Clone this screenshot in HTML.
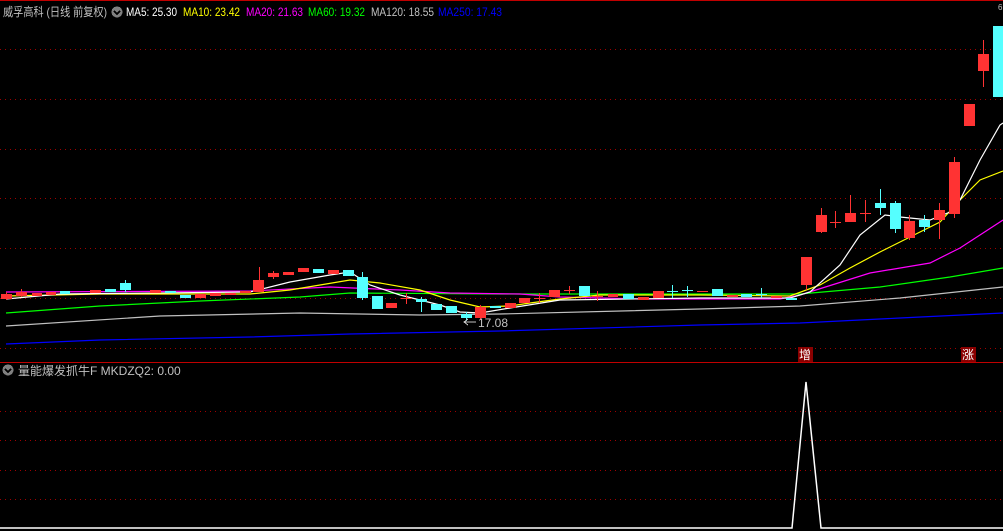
<!DOCTYPE html>
<html><head><meta charset="utf-8"><style>
html,body{margin:0;padding:0;background:#000;width:1003px;height:531px;overflow:hidden}
svg{display:block}
text{font-family:"Liberation Sans","Noto Sans CJK SC",sans-serif;font-size:12px}
</style></head><body>
<svg width="1003" height="531" viewBox="0 0 1003 531" xmlns="http://www.w3.org/2000/svg" shape-rendering="crispEdges">
<rect width="1003" height="531" fill="#000"/>
<line x1="0" y1="0.5" x2="1003" y2="0.5" stroke="#c00000"/>
<g stroke="#a00000" stroke-dasharray="1,4">
<line x1="0" y1="49.5" x2="1003" y2="49.5"/><line x1="0" y1="99.5" x2="1003" y2="99.5"/>
<line x1="0" y1="149.5" x2="1003" y2="149.5"/><line x1="0" y1="198.5" x2="1003" y2="198.5"/>
<line x1="0" y1="248.5" x2="1003" y2="248.5"/><line x1="0" y1="298.5" x2="1003" y2="298.5"/>
<line x1="0" y1="348.5" x2="1003" y2="348.5"/>
<line x1="0" y1="411.5" x2="1003" y2="411.5"/><line x1="0" y1="440.5" x2="1003" y2="440.5"/>
<line x1="0" y1="470.5" x2="1003" y2="470.5"/><line x1="0" y1="499.5" x2="1003" y2="499.5"/>
</g>
<line x1="0" y1="362.5" x2="1003" y2="362.5" stroke="#c00000"/>
<g fill="none" stroke-width="1.2" shape-rendering="auto">
<polyline stroke="#0000ff" points="6,344 100,340 250,337 350,334 500,331 700,325 800,323 900,318 1003,313"/>
<polyline stroke="#c0c0c0" points="6,326 160,316 300,313 420,315 500,314 700,309 800,306 900,298 1003,287"/>
<polyline stroke="#00ff00" points="6,313 100,306 200,301 300,297 350,293 500,294 800,294 880,287 950,277 1003,268"/>
<polyline stroke="#ff00ff" points="6,292 250,291 330,287 400,290 450,293 520,294 560,297 640,299 780,299 800,295 870,273 930,263 960,248 1003,220"/>
<polyline stroke="#ffff00" points="6,296 100,294 250,294 290,290 350,280 380,283 420,290 450,300 480,307 510,306 530,303 560,299 600,295 700,295 790,296 820,285 850,268 880,252 910,237 940,222 960,200 980,180 1003,171"/>
<polyline stroke="#ffffff" points="6,299 60,294 250,292 290,282 330,275 350,272 370,285 400,295 440,305 460,312 480,313 510,308 560,300 700,298 790,298 810,292 840,265 860,235 885,215 900,217 930,220 950,212 960,200 980,160 1000,125 1003,123"/>
</g>
<g>
<g stroke="#ff3333"><line x1="6.5" y1="292" x2="6.5" y2="300"/><line x1="21.5" y1="289" x2="21.5" y2="297"/><line x1="259.5" y1="267" x2="259.5" y2="292"/><line x1="273.5" y1="271" x2="273.5" y2="279"/><line x1="480.5" y1="305" x2="480.5" y2="320"/><line x1="806.5" y1="257" x2="806.5" y2="290"/><line x1="821.5" y1="208" x2="821.5" y2="233"/><line x1="835.5" y1="211" x2="835.5" y2="228"/><line x1="850.5" y1="195" x2="850.5" y2="222"/><line x1="865.5" y1="200" x2="865.5" y2="222"/><line x1="909.5" y1="215" x2="909.5" y2="240"/><line x1="939.5" y1="203" x2="939.5" y2="239"/><line x1="954.5" y1="157" x2="954.5" y2="218"/><line x1="983.5" y1="40" x2="983.5" y2="87"/><line x1="406.5" y1="293" x2="406.5" y2="304"/><line x1="539.5" y1="293" x2="539.5" y2="303"/><line x1="569.5" y1="286" x2="569.5" y2="294"/><line x1="597.5" y1="291" x2="597.5" y2="301"/></g>
<g stroke="#55ffff"><line x1="125.5" y1="280" x2="125.5" y2="292"/><line x1="362.5" y1="272" x2="362.5" y2="300"/><line x1="880.5" y1="189" x2="880.5" y2="215"/><line x1="895.5" y1="201" x2="895.5" y2="233"/><line x1="924.5" y1="215" x2="924.5" y2="232"/><line x1="672.5" y1="285" x2="672.5" y2="298"/><line x1="687.5" y1="286" x2="687.5" y2="297"/><line x1="761.5" y1="288" x2="761.5" y2="298"/><line x1="466.5" y1="312" x2="466.5" y2="321"/><line x1="421.5" y1="297" x2="421.5" y2="312"/></g>
<g fill="#ff3333">
<rect x="1" y="294" width="11" height="5"/><rect x="16" y="292" width="11" height="4"/><rect x="32" y="293" width="10" height="3"/><rect x="46" y="292" width="10" height="3"/>
<rect x="90" y="290" width="11" height="3"/><rect x="150" y="290" width="11" height="3"/><rect x="195" y="294" width="11" height="4"/><rect x="210" y="293" width="11" height="3"/><rect x="225" y="293" width="11" height="2"/><rect x="240" y="291" width="11" height="2"/>
<rect x="253" y="280" width="11" height="12"/><rect x="268" y="273" width="11" height="4"/><rect x="283" y="272" width="11" height="3"/><rect x="298" y="268" width="11" height="4"/><rect x="328" y="270" width="11" height="4"/><rect x="386" y="303" width="11" height="5"/><rect x="401" y="298" width="11" height="1"/>
<rect x="475" y="307" width="11" height="11"/><rect x="505" y="303" width="11" height="5"/><rect x="519" y="298" width="11" height="5"/><rect x="534" y="298" width="11" height="1"/><rect x="549" y="290" width="11" height="7"/><rect x="564" y="290" width="11" height="1"/><rect x="592" y="296" width="11" height="1"/><rect x="608" y="294" width="10" height="3"/><rect x="638" y="297" width="11" height="3"/><rect x="653" y="291" width="11" height="7"/><rect x="697" y="291" width="11" height="1"/><rect x="727" y="295" width="11" height="2"/><rect x="771" y="296" width="11" height="2"/>
<rect x="801" y="257" width="11" height="28"/><rect x="816" y="215" width="11" height="17"/><rect x="830" y="222" width="11" height="1"/><rect x="845" y="213" width="11" height="9"/><rect x="860" y="213" width="11" height="1"/><rect x="904" y="221" width="11" height="17"/><rect x="934" y="210" width="11" height="10"/><rect x="949" y="162" width="11" height="52"/><rect x="964" y="104" width="11" height="22"/><rect x="978" y="54" width="11" height="17"/>
</g>
<g fill="#55ffff">
<rect x="60" y="291" width="10" height="3"/><rect x="105" y="289" width="11" height="3"/><rect x="120" y="283" width="11" height="7"/><rect x="165" y="291" width="11" height="2"/><rect x="180" y="295" width="11" height="3"/><rect x="313" y="269" width="11" height="4"/><rect x="343" y="270" width="11" height="6"/><rect x="357" y="277" width="11" height="21"/><rect x="372" y="296" width="11" height="13"/><rect x="416" y="299" width="11" height="3"/><rect x="431" y="304" width="11" height="6"/><rect x="446" y="306" width="11" height="7"/><rect x="461" y="314" width="11" height="4"/><rect x="490" y="306" width="11" height="2"/><rect x="579" y="286" width="11" height="10"/><rect x="623" y="294" width="11" height="5"/><rect x="667" y="291" width="11" height="1"/><rect x="682" y="290" width="11" height="1"/><rect x="712" y="289" width="11" height="7"/><rect x="741" y="294" width="11" height="3"/><rect x="756" y="294" width="11" height="1"/><rect x="786" y="298" width="11" height="2"/>
<rect x="875" y="203" width="11" height="5"/><rect x="890" y="203" width="11" height="26"/><rect x="919" y="220" width="11" height="7"/><rect x="993" y="26" width="10" height="71"/>
</g>
</g>
<line x1="464" y1="322" x2="476" y2="322" stroke="#c0c0c0"/>
<polyline points="468,319 464,322 468,325" fill="none" stroke="#c0c0c0"/>
<text x="478" y="327" fill="#c0c0c0">17.08</text>
<rect x="798" y="347" width="15" height="15" fill="#8a0000"/>
<text x="799" y="359" fill="#fff">增</text>
<rect x="961" y="347" width="15" height="15" fill="#8a0000"/>
<text x="962" y="359" fill="#fff">涨</text>
<text x="998" y="10" fill="#c0c0c0" style="font-size:8px">6</text>
<text x="3" y="16" fill="#c0c0c0" textLength="104" lengthAdjust="spacingAndGlyphs">威孚高科 (日线 前复权)</text>
<circle cx="117" cy="12" r="5.5" fill="#808080"/>
<polyline points="114,11 117,14 120,11" fill="none" stroke="#000" stroke-width="1.5"/>
<text x="126" y="16" fill="#fff" textLength="51" lengthAdjust="spacingAndGlyphs">MA5: 25.30</text>
<text x="183" y="16" fill="#ffff00" textLength="57" lengthAdjust="spacingAndGlyphs">MA10: 23.42</text>
<text x="246" y="16" fill="#ff00ff" textLength="57" lengthAdjust="spacingAndGlyphs">MA20: 21.63</text>
<text x="308" y="16" fill="#00ff00" textLength="57" lengthAdjust="spacingAndGlyphs">MA60: 19.32</text>
<text x="371" y="16" fill="#c0c0c0" textLength="63" lengthAdjust="spacingAndGlyphs">MA120: 18.55</text>
<text x="438" y="16" fill="#0000ff" textLength="64" lengthAdjust="spacingAndGlyphs">MA250: 17.43</text>
<circle cx="8" cy="370" r="5.5" fill="#808080"/>
<polyline points="5,369 8,372 11,369" fill="none" stroke="#000" stroke-width="1.5"/>
<text x="18" y="375" fill="#c0c0c0">量能爆发抓牛F  MKDZQ2: 0.00</text>
<polyline points="0,528 792,528 806,382 821,528 1003,528" fill="none" stroke="#fff" stroke-width="1.5" shape-rendering="auto"/>
</svg>
</body></html>
